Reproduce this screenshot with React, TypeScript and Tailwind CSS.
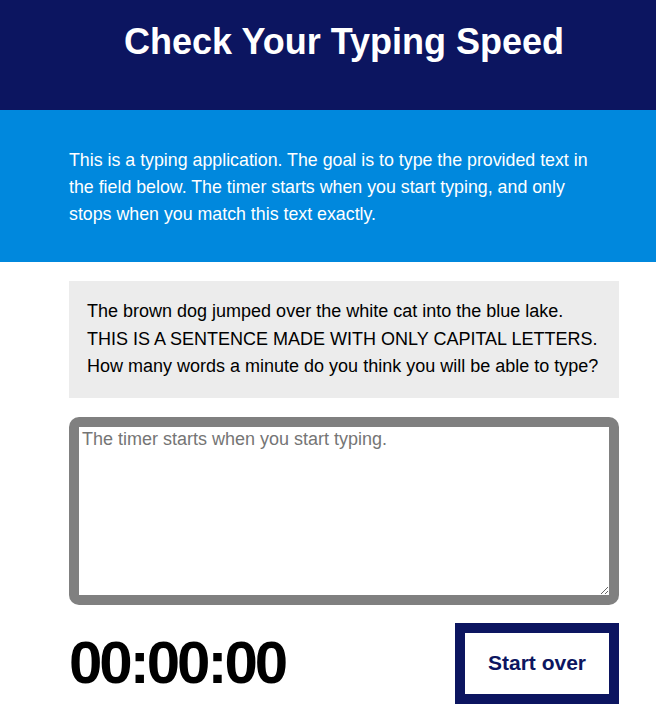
import { useEffect, useRef, useState } from 'react';

const LINES = [
  'The brown dog jumped over the white cat into the blue lake.',
  'THIS IS A SENTENCE MADE WITH ONLY CAPITAL LETTERS.',
  'How many words a minute do you think you will be able to type?',
];
const SAMPLE = LINES.join(' ');

function pad(n: number) {
  return n < 10 ? '0' + n : String(n);
}

export default function App() {
  const [text, setText] = useState('');
  const [ticks, setTicks] = useState(0);
  const [running, setRunning] = useState(false);
  const timer = useRef<number | null>(null);

  useEffect(() => {
    if (!running) return;
    timer.current = window.setInterval(() => setTicks((t) => t + 1), 10);
    return () => {
      if (timer.current) window.clearInterval(timer.current);
    };
  }, [running]);

  const onType = (v: string) => {
    setText(v);
    if (!running && v.length > 0 && v !== SAMPLE) setRunning(true);
    if (v === SAMPLE) setRunning(false);
  };

  const reset = () => {
    setRunning(false);
    setTicks(0);
    setText('');
  };

  const mins = Math.floor(ticks / 6000);
  const secs = Math.floor((ticks / 100) % 60);
  const hund = ticks % 100;

  return (
    <div className="min-h-screen bg-white font-['Liberation_Sans',Arial,sans-serif]">
      <header className="h-[110px] bg-[#0c1560] pl-[124px] pt-[24px]">
        <h1 className="text-[36px] font-bold leading-[36px] text-white">Check Your Typing Speed</h1>
      </header>

      <div className="bg-[#0088dd] pb-[34px] pl-[69px] pr-[37px] pt-[37px]">
        <p className="max-w-[532px] text-[17.8px] leading-[27px] text-white">
          This is a typing application. The goal is to type the provided text in the field below. The timer starts
          when you start typing, and only stops when you match this text exactly.
        </p>
      </div>

      <main className="ml-[69px] w-[550px] pt-[19px]">
        <div className="bg-[#ececec] px-[18px] py-[17px] text-[18px] leading-[27.5px] text-black">
          <p>
            {LINES.map((l, i) => (
              <span key={i} className="block">
                {l}
              </span>
            ))}
          </p>
        </div>

        <div className="mt-[19px] rounded-[10px] bg-[#808080] p-[10px]">
          <textarea
            value={text}
            onChange={(e) => onType(e.target.value)}
            placeholder="The timer starts when you start typing."
            className="block h-[168px] w-full bg-white px-[3px] py-[2px] text-[18px] leading-[20px] text-black outline-none placeholder:text-[#757575]"
          />
        </div>

        <div className="mt-[18px] flex items-center justify-between">
          <div className="text-[60px] font-bold leading-none tracking-[-3px] text-black">
            {pad(mins)}:{pad(secs)}:{pad(hund)}
          </div>
          <button
            onClick={reset}
            className="h-[81px] w-[164px] border-[10px] border-[#0c1560] bg-white text-[21px] font-bold text-[#0c1560]"
          >
            Start over
          </button>
        </div>
      </main>
    </div>
  );
}
